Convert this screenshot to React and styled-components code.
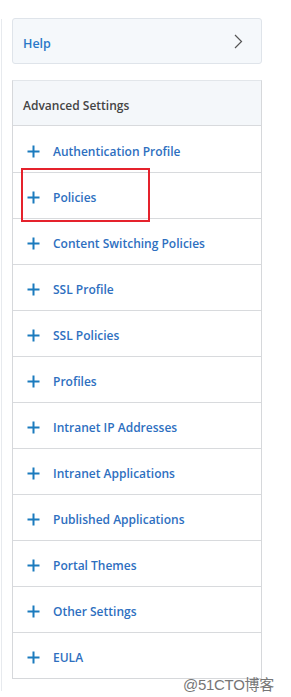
import React from "react";
import styled, { createGlobalStyle } from "styled-components";

const Global = createGlobalStyle`
  html, body { margin: 0; padding: 0; background: #ffffff; }
  body { font-family: "Open Sans", "Noto Sans", sans-serif; }
`;

const Page = styled.div`
  position: relative;
  display: flex;
  width: 291px;
  height: 697px;
  overflow: hidden;
  background: #fff;
`;

const Ghost = styled.div`
  width: 1px;
  margin: 19px 0 6px 1px;
  background: #e7eaee;
`;

const Column = styled.div`
  display: flex;
  flex-direction: column;
  gap: 16px;
  width: 250px;
  margin: 18px 0 0 10px;
`;

const HelpBox = styled.div`
  display: flex;
  align-items: center;
  justify-content: space-between;
  padding: 0 18px 0 10px;
  background: #f5f8fb;
  border: 1px solid #dfe4ea;
  border-radius: 3px;
  box-sizing: border-box;
  height: 46px;
`;

const HelpText = styled.span`
  color: #2a78c8;
  font-size: 12.5px;
  font-weight: 600;
  margin-top: 5px;
`;

const Panel = styled.div`
  display: flex;
  flex-direction: column;
  border: 1px solid #d6d8db;
  border-top-color: #e2e6ea;
`;

const Header = styled.div`
  display: flex;
  align-items: center;
  padding: 4px 10px 0;
  background: #f4f7fa;
  color: #444;
  font-size: 12px;
  font-weight: 600;
  border-bottom: 1px solid #d8dadd;
  box-sizing: border-box;
  height: 45px;
`;

const Row = styled.div`
  display: flex;
  align-items: center;
  gap: 13px;
  height: 46px;
  padding: 4px 0 0 14px;
  box-sizing: border-box;
  border-top: ${(p) => (p.$first ? "none" : "1px solid #d8dadd")};
  color: #2e6fbf;
  font-size: 12px;
  font-weight: 600;
`;

const Highlight = styled.div`
  position: absolute;
  left: 21px;
  top: 168px;
  width: 129px;
  height: 54px;
  border: 2px solid #e5222c;
  box-sizing: border-box;
`;

const Watermark = styled.div`
  position: absolute;
  left: 183px;
  top: 673px;
  color: #555;
  font-family: "Liberation Sans", "Noto Sans CJK SC", sans-serif;
  font-size: 15px;
  opacity: 0.8;
  letter-spacing: -0.3px;
`;

const Plus = () => (
  <svg width="13" height="13" viewBox="0 0 13 13" style={{ flex: "none" }}>
    <path d="M6.5 0.5v12M0.5 6.5h12" stroke="#1b7bbe" strokeWidth="2" />
  </svg>
);

const Chevron = () => (
  <svg width="9" height="15" viewBox="0 0 9 15">
    <path d="M1 1l6.5 6.5L1 14" fill="none" stroke="#555" strokeWidth="1.2" />
  </svg>
);

const items = [
  "Authentication Profile",
  "Policies",
  "Content Switching Policies",
  "SSL Profile",
  "SSL Policies",
  "Profiles",
  "Intranet IP Addresses",
  "Intranet Applications",
  "Published Applications",
  "Portal Themes",
  "Other Settings",
  "EULA",
];

export default function App() {
  return (
    <Page>
      <Global />
      <Ghost />
      <Column>
        <HelpBox>
          <HelpText>Help</HelpText>
          <Chevron />
        </HelpBox>
        <Panel>
          <Header>Advanced Settings</Header>
          {items.map((t, i) => (
            <Row key={t} $first={i === 0}>
              <Plus />
              <span>{t}</span>
            </Row>
          ))}
        </Panel>
      </Column>
      <Highlight />
      <Watermark>@51CTO博客</Watermark>
    </Page>
  );
}
